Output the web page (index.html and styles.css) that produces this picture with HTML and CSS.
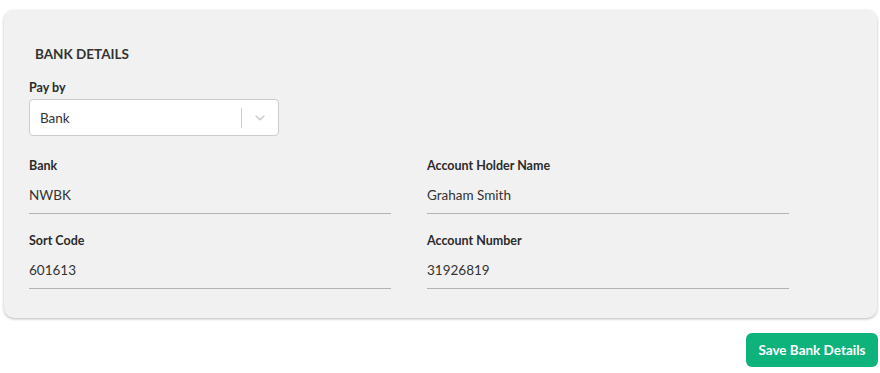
FILE: index.html
```html
<!DOCTYPE html>
<html lang="en">
<head>
<meta charset="utf-8">
<title>Bank Details</title>
<link rel="stylesheet" href="styles.css">
</head>
<body>
<div class="page">
  <section class="card">
    <h2 class="card-title">BANK DETAILS</h2>
    <div class="field-select">
      <label class="label">Pay by</label>
      <div class="select">
        <span class="select-value">Bank</span>
        <span class="select-sep"></span>
        <span class="select-arrow">
          <svg width="14" height="14" viewBox="0 0 20 20"><path d="M4.5 7.5 L10 12.5 L15.5 7.5" fill="none" stroke="#cccccc" stroke-width="2.4" stroke-linecap="round" stroke-linejoin="round"/></svg>
        </span>
      </div>
    </div>
    <div class="grid">
      <div class="field">
        <label class="label">Bank</label>
        <div class="value">NWBK</div>
      </div>
      <div class="field">
        <label class="label">Account Holder Name</label>
        <div class="value">Graham Smith</div>
      </div>
      <div class="field">
        <label class="label">Sort Code</label>
        <div class="value">601613</div>
      </div>
      <div class="field">
        <label class="label">Account Number</label>
        <div class="value">31926819</div>
      </div>
    </div>
  </section>
  <div class="actions">
    <button class="btn">Save Bank Details</button>
  </div>
</div>
</body>
</html>
```
FILE: styles.css
```css
* { box-sizing: border-box; }
html, body { margin: 0; padding: 0; background: #ffffff; }
body {
  font-family: "Lato", "Open Sans", "Liberation Sans", sans-serif;
  color: #333333;
  font-size: 13px;
}
.page {
  padding: 10px 2px 0 4px;
}
.card {
  width: 873px;
  height: 308px;
  background: #f1f1f1;
  border-radius: 10px;
  box-shadow: 0 1px 3px rgba(0,0,0,0.28);
  padding: 36px 25px 0 25px;
}
.card-title {
  margin: 0 0 18px 6px;
  font-size: 13.5px;
  font-weight: 700;
  line-height: 16px;
  color: #333333;
}
.label {
  display: block;
  font-size: 12.5px;
  font-weight: 700;
  line-height: 16px;
  color: #2b2b2b;
}
.field-select .label { margin-bottom: 3px; }
.select {
  width: 250px;
  height: 37px;
  background: #ffffff;
  border: 1px solid #cccccc;
  border-radius: 4px;
  display: flex;
  align-items: center;
  padding-left: 10px;
}
.select-value {
  flex: 1;
  font-size: 13.5px;
  color: #333333;
}
.select-sep {
  width: 1px;
  height: 20px;
  background: #cccccc;
}
.select-arrow {
  width: 36px;
  display: flex;
  justify-content: center;
  align-items: center;
}
.grid {
  display: grid;
  grid-template-columns: 362px 362px;
  column-gap: 36px;
  row-gap: 19px;
  margin-top: 22px;
}
.field .label { margin-bottom: 12px; }
.value {
  font-size: 13.5px;
  line-height: 18px;
  padding-bottom: 9px;
  border-bottom: 1px solid #b3b3b3;
  color: #333333;
}
.actions {
  display: flex;
  justify-content: flex-end;
  padding-top: 15px;
  padding-right: 0;
}
.btn {
  font-family: inherit;
  background: #0db37b;
  color: #ffffff;
  border: none;
  border-radius: 6px;
  height: 34px;
  width: 132px;
  font-size: 13.5px;
  font-weight: 700;
  cursor: pointer;
}
```
